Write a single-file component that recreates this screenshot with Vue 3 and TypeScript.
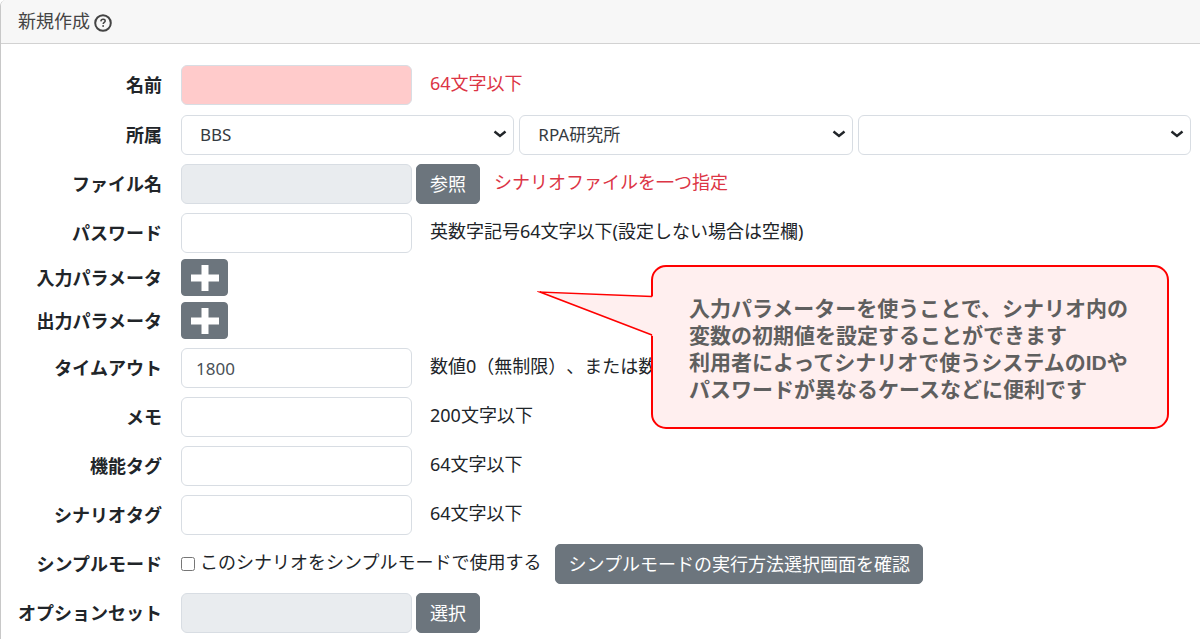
<script setup lang="ts">
import { reactive } from 'vue'

interface Row {
  id: string
  label: string
  kind: 'input' | 'selects' | 'add' | 'check'
  state?: 'required' | 'readonly'
  type?: string
  button?: string
  hint?: string
  alert?: boolean
}

const rows: Row[] = [
  { id: 'name', label: '名前', kind: 'input', state: 'required', hint: '64文字以下', alert: true },
  { id: 'group', label: '所属', kind: 'selects' },
  { id: 'file', label: 'ファイル名', kind: 'input', state: 'readonly', button: '参照', hint: 'シナリオファイルを一つ指定', alert: true },
  { id: 'password', label: 'パスワード', kind: 'input', type: 'password', hint: '英数字記号64文字以下(設定しない場合は空欄)' },
  { id: 'inparam', label: '入力パラメータ', kind: 'add' },
  { id: 'outparam', label: '出力パラメータ', kind: 'add' },
  { id: 'timeout', label: 'タイムアウト', kind: 'input', hint: '数値0（無制限）、または数' },
  { id: 'memo', label: 'メモ', kind: 'input', hint: '200文字以下' },
  { id: 'functag', label: '機能タグ', kind: 'input', hint: '64文字以下' },
  { id: 'scenariotag', label: 'シナリオタグ', kind: 'input', hint: '64文字以下' },
  { id: 'simple', label: 'シンプルモード', kind: 'check', button: 'シンプルモードの実行方法選択画面を確認' },
  { id: 'optionset', label: 'オプションセット', kind: 'input', state: 'readonly', button: '選択' },
]

const groups: string[] = ['BBS', 'RPA研究所', '']

const values = reactive<Record<string, string>>({
  name: '', file: '', password: '', timeout: '1800', memo: '', functag: '', scenariotag: '', optionset: '',
})

const tips: string[] = [
  '入力パラメーターを使うことで、シナリオ内の',
  '変数の初期値を設定することができます',
  '利用者によってシナリオで使うシステムのIDや',
  'パスワードが異なるケースなどに便利です',
]
</script>

<template>
  <main class="card">
    <header class="head">
      <span>新規作成</span>
      <svg class="help" viewBox="0 0 18 18" aria-hidden="true">
        <circle cx="9" cy="9" r="7.8" fill="none" stroke="#444" stroke-width="2" />
        <path d="M6.9 7.4C7 5.9 7.9 5.3 9.1 5.3c1.3 0 2.1.7 2.1 1.7 0 1.4-2 1.4-2 3" fill="none" stroke="#444" stroke-width="1.5" />
        <rect x="8.3" y="11.2" width="1.7" height="1.6" fill="#444" />
      </svg>
    </header>

    <form class="body" @submit.prevent>
      <div v-for="row in rows" :key="row.id" class="row" :class="'row-' + row.kind">
        <label class="label" :for="row.id">{{ row.label }}</label>

        <template v-if="row.kind === 'input'">
          <input
            :id="row.id"
            v-model="values[row.id]"
            class="field"
            :class="row.state"
            :type="row.type ?? 'text'"
            :readonly="row.state === 'readonly'"
            autocomplete="off"
          />
          <button v-if="row.button" type="button" class="btn side">{{ row.button }}</button>
          <span v-if="row.hint" class="hint" :class="{ alert: row.alert, near: row.button }">{{ row.hint }}</span>
        </template>

        <div v-else-if="row.kind === 'selects'" class="selects">
          <div v-for="(g, i) in groups" :key="i" class="pick">
            <select :id="i === 0 ? row.id : row.id + i" :aria-label="row.label">
              <option>{{ g }}</option>
            </select>
            <svg class="chev" viewBox="0 0 14 8" aria-hidden="true">
              <path d="M1.5 1.5 7 6l5.500-4.500" fill="none" stroke="#212529" stroke-width="2.4" />
            </svg>
          </div>
        </div>

        <button v-else-if="row.kind === 'add'" :id="row.id" type="button" class="btn add">
          <svg viewBox="0 0 28 26" aria-hidden="true">
            <path d="M10.500 0h7v9.500H28v7H17.500V26h-7v-9.500H0v-7h10.500z" fill="#fff" />
          </svg>
        </button>

        <template v-else>
          <input :id="row.id" type="checkbox" class="check" />
          <label class="hint checktext" :for="row.id">このシナリオをシンプルモードで使用する</label>
          <button type="button" class="btn confirm">{{ row.button }}</button>
        </template>
      </div>
    </form>

    <aside class="callout">
      <svg class="tail" viewBox="0 0 116 48" aria-hidden="true">
        <path d="M116 6.500 2 2l114 44z" fill="#ffefef" />
        <path d="M115 6.500 3 2l112 43" fill="none" stroke="#f00" stroke-width="1.500" stroke-miterlimit="12" />
      </svg>
      <p v-for="t in tips" :key="t">{{ t }}</p>
    </aside>
  </main>
</template>

<style>
body {
  margin: 0;
  background: #fff;
}
</style>

<style scoped>
* {
  box-sizing: border-box;
}
.card {
  position: relative;
  min-height: 100vh;
  border-left: 1px solid #c8c8c8;
  border-top-left-radius: 6px;
  color: #212529;
  font: 18px/26px 'Noto Sans', 'Noto Sans CJK JP', sans-serif;
  text-spacing-trim: space-all;
  overflow: hidden;
}
.head {
  display: flex;
  align-items: center;
  gap: 4px;
  height: 44px;
  padding: 0 17px 2px;
  background: #f7f7f7;
  border-bottom: 1px solid #d2d2d2;
  color: #444;
}
.help {
  width: 18px;
  height: 18px;
  margin-top: 4px;
}
.body {
  padding: 21px 9px 0 0;
}
.row {
  display: flex;
  align-items: center;
  height: 40px;
  margin-bottom: 9px;
  white-space: nowrap;
}
.row:first-child {
  margin-bottom: 10px;
}
.row-add {
  height: 37px;
}
.row:has(+ .row-add) {
  margin-bottom: 6px;
}
.label {
  flex: none;
  width: 161px;
  margin-right: 19px;
  text-align: right;
  font-weight: 700;
}
.field {
  flex: none;
  width: 231px;
  height: 40px;
  padding: 0 14px;
  border: 1px solid #d8dde3;
  border-radius: 6px;
  background: #fff;
  color: #495057;
  font: inherit;
  font-size: 17px;
}
.required {
  background: #ffcbcb;
}
.readonly {
  background: #e9ecef;
}
.hint {
  margin-left: 18px;
  padding-bottom: 4px;
}
.hint.near {
  margin-left: 14px;
}
.alert {
  color: #dc3545;
}
.btn {
  flex: none;
  height: 40px;
  padding: 0 12px;
  border: 1px solid #6c757d;
  border-radius: 5px;
  background: #6c757d;
  color: #fff;
  font: inherit;
}
.side {
  min-width: 64px;
  margin-left: 4px;
}
.add {
  display: flex;
  align-items: center;
  justify-content: center;
  width: 47px;
  height: 37px;
  padding: 0;
  border-radius: 4px;
}
.add svg {
  width: 28px;
  height: 26px;
}
.selects {
  display: flex;
  flex: 1;
  gap: 5px;
}
.pick {
  position: relative;
  flex: 1;
}
.pick select {
  display: block;
  width: 100%;
  height: 40px;
  padding: 0 30px 0 18px;
  appearance: none;
  border: 1px solid #d8dde3;
  border-radius: 6px;
  background: #fff;
  color: #343a40;
  font: inherit;
  font-size: 17px;
}
.chev {
  position: absolute;
  top: 15px;
  right: 7px;
  width: 14px;
  height: 8px;
  pointer-events: none;
}
.check {
  flex: none;
  width: 14px;
  height: 14px;
  margin: 0;
}
.hint.checktext {
  margin-left: 5px;
}
.confirm {
  margin-left: 14px;
}
.callout {
  position: absolute;
  top: 265px;
  left: 650px;
  right: 31px;
  padding: 28px 0 24px 36px;
  border: 2px solid #f00;
  border-radius: 15px;
  background: #ffefef;
  color: #5f5f5f;
  font-family: 'Liberation Sans', 'Noto Sans CJK JP', sans-serif;
  font-size: 21px;
  font-weight: 700;
  line-height: 27px;
  white-space: nowrap;
}
.callout p {
  margin: 0;
}
.tail {
  position: absolute;
  top: 23px;
  left: -116px;
  width: 116px;
  height: 48px;
}
</style>
